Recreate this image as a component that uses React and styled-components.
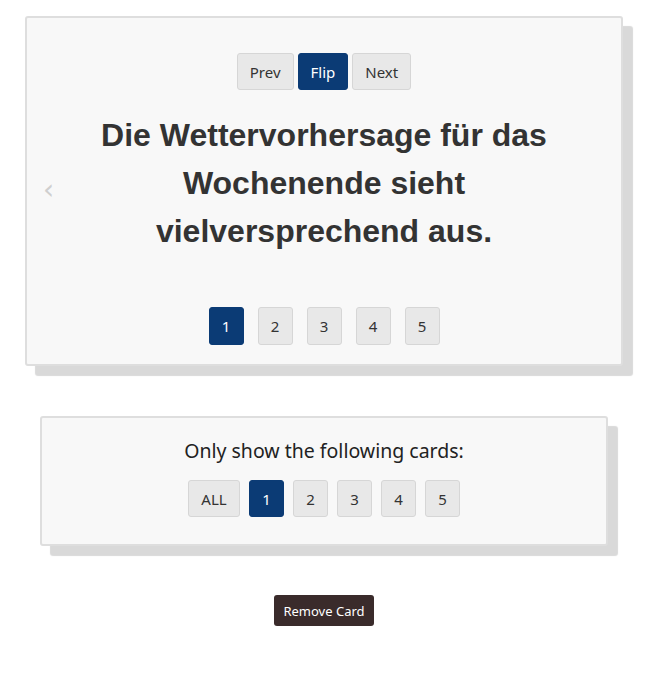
import React, { useState } from "react";
import styled, { createGlobalStyle } from "styled-components";

const Global = createGlobalStyle`
  html, body { margin: 0; padding: 0; background: #fff; }
  body { font-family: "Noto Sans", "Open Sans", sans-serif; color: #333; }
`;

const Page = styled.div`
  width: 648px;
  padding-top: 16px;
  display: flex;
  flex-direction: column;
  align-items: center;
`;

const Card = styled.div`
  position: relative;
  box-sizing: border-box;
  width: ${p => p.$width}px;
  background: #f8f8f8;
  border: 2px solid #dedede;
  border-radius: 3px;
  box-shadow: 10px 10px 1px #d9d9d9;
  display: flex;
  flex-direction: column;
  align-items: center;
`;

const FlashCard = styled(Card)`
  height: 350px;
  padding-top: 35px;
`;

const FilterCard = styled(Card)`
  margin-top: 50px;
  height: 130px;
  padding-top: 17px;
`;

const Row = styled.div`
  display: flex;
  gap: ${p => p.$gap}px;
`;

const Btn = styled.button`
  box-sizing: border-box;
  height: ${p => p.$h || 37}px;
  min-width: ${p => p.$w || 0}px;
  padding: 0 ${p => p.$pad ?? 12}px;
  font-family: "Noto Sans", "Open Sans", sans-serif;
  font-size: 15px;
  border-radius: 3px;
  cursor: pointer;
  border: 1px solid ${p => (p.$active ? "#0b3b75" : "#d6d6d6")};
  background: ${p => (p.$active ? "#0b3b75" : "#e8e8e8")};
  color: ${p => (p.$active ? "#fff" : "#333")};
`;

const Heading = styled.h1`
  margin: 21px 0 0;
  width: 485px;
  text-align: center;
  font-family: "Liberation Sans", Arial, sans-serif;
  font-weight: bold;
  font-size: 32px;
  line-height: 48px;
  color: #333;
`;

const Pager = styled(Row)`
  margin-top: 52px;
`;

const Chevron = styled.span`
  position: absolute;
  left: 16px;
  top: 155px;
  font-size: 28px;
  color: #cfcfcf;
  font-family: "DejaVu Sans", sans-serif;
`;

const FilterTitle = styled.div`
  font-size: 19.5px;
  line-height: 32px;
  color: #222;
  margin-bottom: 13px;
`;

const RemoveBtn = styled.button`
  margin-top: 49px;
  height: 31px;
  padding: 0 9px;
  border: none;
  border-radius: 3px;
  background: #3a2b2b;
  color: #fff;
  font-family: "Noto Sans", "Open Sans", sans-serif;
  font-size: 13px;
  cursor: pointer;
`;

const cards = [1, 2, 3, 4, 5];

export default function App() {
  const [current, setCurrent] = useState(1);
  const [filter, setFilter] = useState(1);
  return (
    <>
      <Global />
      <Page>
        <FlashCard $width={598}>
          <Chevron>‹</Chevron>
          <Row $gap={4}>
            <Btn>Prev</Btn>
            <Btn $active>Flip</Btn>
            <Btn>Next</Btn>
          </Row>
          <Heading>Die Wettervorhersage für das Wochenende sieht vielversprechend aus.</Heading>
          <Pager $gap={14}>
            {cards.map(n => (
              <Btn key={n} $h={38} $w={35} $pad={0} $active={current === n} onClick={() => setCurrent(n)}>
                {n}
              </Btn>
            ))}
          </Pager>
        </FlashCard>
        <FilterCard $width={568}>
          <FilterTitle>Only show the following cards:</FilterTitle>
          <Row $gap={9}>
            <Btn $w={52} $pad={0} $active={filter === "all"} onClick={() => setFilter("all")}>ALL</Btn>
            {cards.map(n => (
              <Btn key={n} $w={35} $pad={0} $active={filter === n} onClick={() => setFilter(n)}>
                {n}
              </Btn>
            ))}
          </Row>
        </FilterCard>
        <RemoveBtn>Remove Card</RemoveBtn>
      </Page>
    </>
  );
}
